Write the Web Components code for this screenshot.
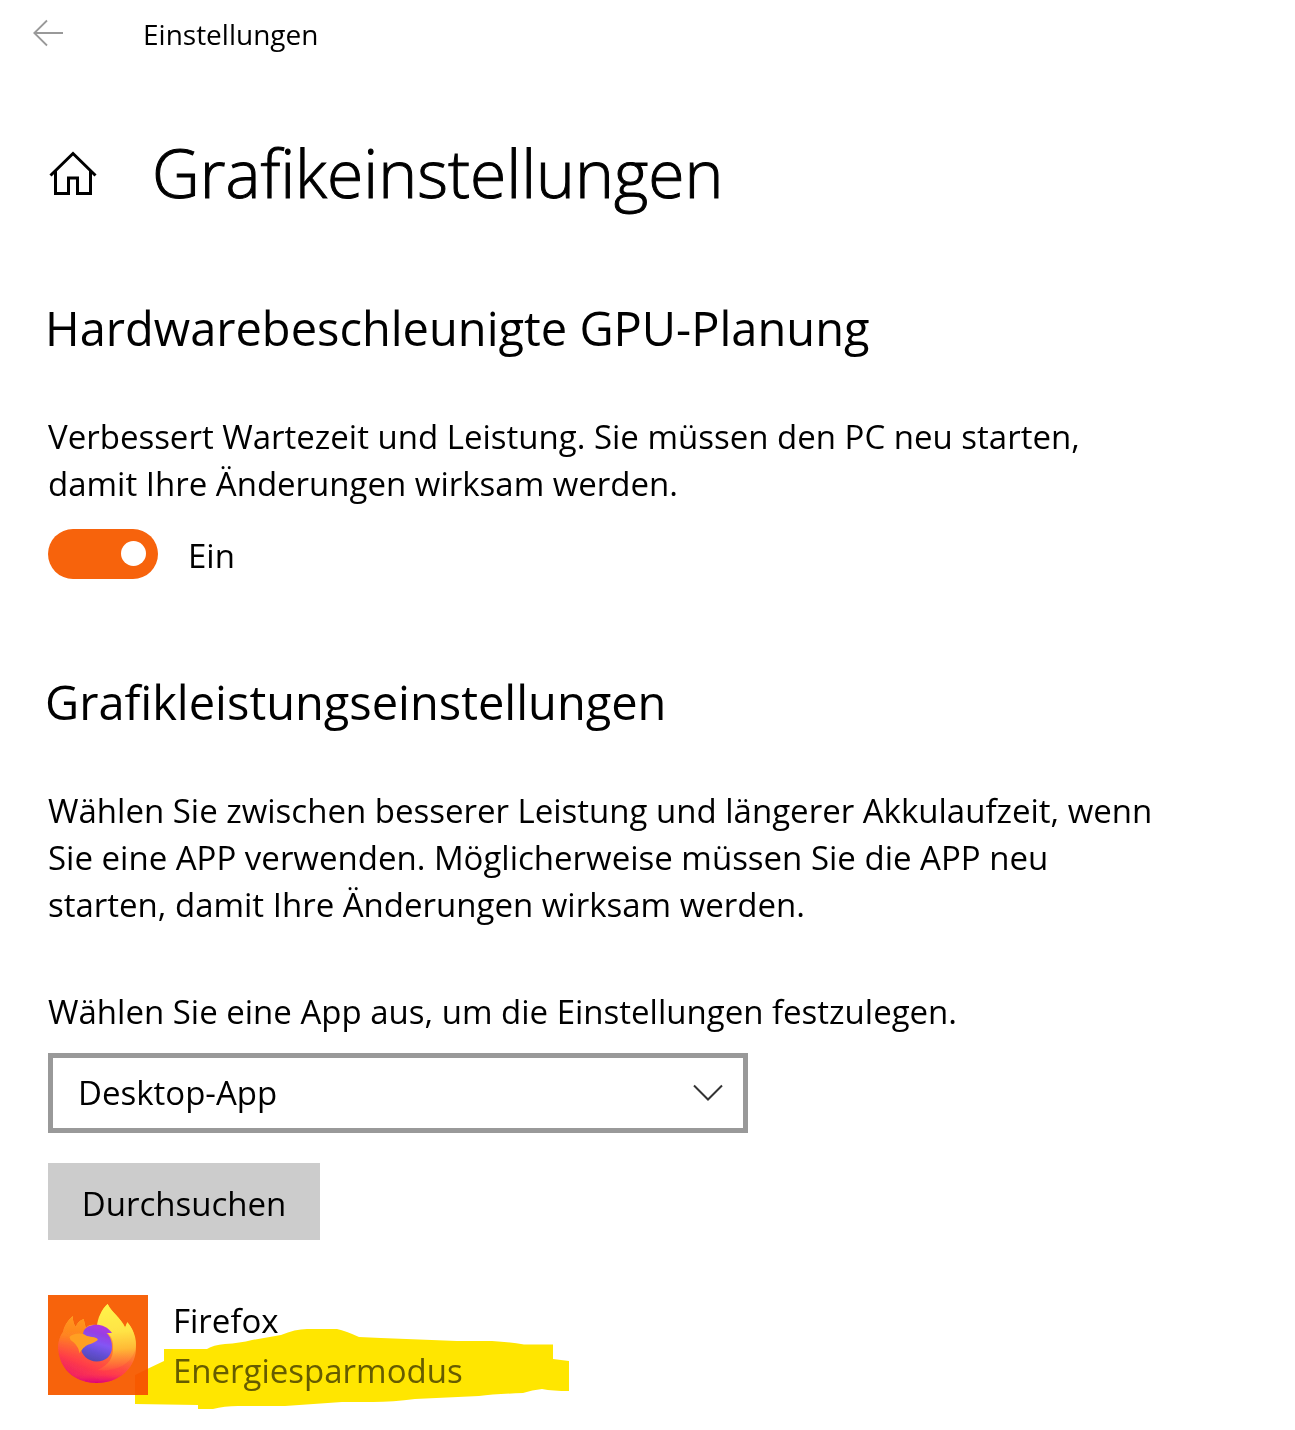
<!DOCTYPE html>
<html lang="de">
<head>
<meta charset="utf-8">
<meta name="viewport" content="width=device-width, initial-scale=1">
<title>Einstellungen</title>
<style>
body { margin: 0; background: #fff; color: #000; font-family: "Segoe UI", "Open Sans", "Noto Sans", sans-serif; font-size: 33px; line-height: 47px; --accent: #f7630c; }
</style>
</head>
<body>
<settings-page></settings-page>
<script>
const define = (name, html) => {
  const template = document.createElement('template');
  template.innerHTML = html;
  customElements.define(name, class extends HTMLElement {
    constructor() {
      super();
      this.attachShadow({ mode: 'open' }).append(template.content.cloneNode(true));
    }
  });
};

define('title-bar', `
<style>
:host { display: flex; align-items: center; gap: 79px; padding: 14px 32px 0; font-size: 28px; line-height: 40px; }
button { display: flex; padding: 0; border: 0; background: none; color: #999; }
svg { display: block; margin-bottom: 2px; }
</style>
<button type="button" aria-label="Zurück">
<svg width="32" height="28" viewBox="0 0 32 28" fill="none" stroke="currentColor" stroke-width="1.8"><path d="M15 1.5 2.3 14 15 26.500M2.300 14H31"/></svg>
</button>
<span><slot></slot></span>`);

define('page-title', `
<style>
:host { display: flex; align-items: center; gap: 54px; padding: 71px 48px 0; }
a { color: inherit; display: block; }
svg { display: block; }
h1 { margin: 0; font-size: 66px; line-height: 94px; font-weight: 300; -webkit-text-stroke: 1px currentColor; }
</style>
<a href="#" aria-label="Startseite">
<svg width="50" height="46" viewBox="0 0 50 46" fill="none" stroke="currentColor" stroke-width="3"><path d="M2.500 27 25 5 47.500 27M7.500 22.500V45H20.500V29.500H29.500V45H42.500V22.500" transform="translate(0 -.5)"/></svg>
</a>
<h1><slot></slot></h1>`);

define('settings-section', `
<style>
:host { display: block; padding: 76px 48px 0; }
:host([follow]) { padding-top: 90px; }
h2 { margin: 0 0 52px -3px; font-size: 47px; line-height: 66px; font-weight: 400; }
</style>
<h2><slot name="heading"></slot></h2>
<slot></slot>`);

define('info-text', `
<style>
:host { display: block; max-width: 1118px; }
p { margin: 0; }
</style>
<p><slot></slot></p>`);

define('toggle-switch', `
<style>
:host { display: block; margin-top: 21px; }
label { display: flex; align-items: center; gap: 30px; }
input { appearance: none; margin: 0; box-sizing: border-box; width: 110px; height: 50px; padding: 0 12px; border-radius: 25px; background: #999; display: flex; align-items: center; }
input::before { content: ""; width: 25px; height: 25px; border-radius: 50%; background: #fff; }
input:checked { background: var(--accent); justify-content: flex-end; }
span { padding-top: 4px; }
</style>
<label><input type="checkbox" role="switch" checked><span><slot></slot></span></label>`);

define('app-picker', `
<style>
:host { display: block; margin-top: 60px; }
label { display: block; margin-bottom: 18px; }
.box { display: grid; align-items: center; max-width: 700px; }
select, svg { grid-area: 1 / 1; }
select { appearance: none; box-sizing: border-box; width: 100%; height: 80px; margin: 0; padding: 0 72px 2px 25px; border: 5px solid #999; border-radius: 0; background: #fff; color: #000; font: inherit; }
svg { justify-self: end; margin-right: 24px; pointer-events: none; }
button { margin: 30px 0 0; width: 272px; height: 77px; padding: 4px 0 0; border: 0; background: #ccc; color: #000; font: inherit; }
</style>
<label for="app"><slot></slot></label>
<div class="box">
<select id="app"><option>Desktop-App</option><option>Microsoft Store-App</option></select>
<svg width="32" height="20" viewBox="0 0 32 20" fill="none" stroke="#333" stroke-width="2"><path d="M2 2.500 16 16.500 30 2.500"/></svg>
</div>
<button type="button">Durchsuchen</button>`);

define('firefox-logo', `
<style>
:host { display: block; width: 100px; height: 100px; background: var(--accent); }
svg { display: block; }
</style>
<svg width="100" height="100" viewBox="0 0 100 100" role="img" aria-label="Firefox">
<defs>
<linearGradient id="body" gradientUnits="userSpaceOnUse" x1="64" y1="22" x2="34" y2="90"><stop offset="0" stop-color="#ffe040"/><stop offset=".25" stop-color="#ffb030"/><stop offset=".5" stop-color="#ff6a35"/><stop offset=".75" stop-color="#ff3d48"/><stop offset="1" stop-color="#e4126f"/></linearGradient>
<linearGradient id="ears" gradientUnits="userSpaceOnUse" x1="28" y1="20" x2="22" y2="64"><stop offset="0" stop-color="#ff9a1c"/><stop offset=".5" stop-color="#ff8420"/><stop offset="1" stop-color="#ff5238" stop-opacity="0"/></linearGradient>
<linearGradient id="rim" x1=".5" y1="0" x2=".5" y2="1"><stop offset=".5" stop-color="#ff3a4b" stop-opacity="0"/><stop offset=".8" stop-color="#ff3452" stop-opacity=".4"/><stop offset="1" stop-color="#dc007c"/></linearGradient>
<linearGradient id="flame" gradientUnits="userSpaceOnUse" x1="60" y1="10" x2="66" y2="80"><stop offset="0" stop-color="#fff44a"/><stop offset=".4" stop-color="#ffe345"/><stop offset=".65" stop-color="#ffb936"/><stop offset=".85" stop-color="#ff7b38" stop-opacity=".7"/><stop offset="1" stop-color="#ff5a3a" stop-opacity="0"/></linearGradient>
<linearGradient id="globe" gradientUnits="userSpaceOnUse" x1="54" y1="31" x2="42" y2="68"><stop offset="0" stop-color="#b836dc"/><stop offset=".25" stop-color="#963fe4"/><stop offset=".5" stop-color="#8355f4"/><stop offset=".72" stop-color="#6650d8"/><stop offset="1" stop-color="#5148ac"/></linearGradient>
<filter id="soft"><feGaussianBlur stdDeviation=".7"/></filter>
</defs>
<g filter="url(#soft)" transform="matrix(1.09 0 0 1 -2.500 -1)">
<path d="M25 22C20 27 17 32 16 38C12 44 11 52 12 58C14 77 29 89 47 89C68 89 84 73 83 52C82 42 80 33 75 29L73 33C69 24 61 19 57 10C51 16 49 24 49 32C44 30 40 30 37 34L35 25C31 27 29 29 28 33C26 31 25 26 25 22Z" fill="url(#body)"/>
<path d="M25 22C20 27 17 32 16 38C12 44 11 52 12 58C16 66 26 68 34 62L38 40L35 25C31 27 29 29 28 33C26 31 25 26 25 22Z" fill="url(#ears)"/>
<path d="M12 52C12 74 28 89 47 89C67 89 83 75 83 52L75 45C76 70 60 79 45 76C30 75 18 66 12 52Z" fill="url(#rim)"/>
<path d="M57 10C51 16 48 24 47 33C56 35 63 43 62 54C62 64 58 71 48 76C70 79 83 64 83 50C83 41 79 33 75 28L73 34C69 23 61 19 57 10Z" fill="url(#flame)"/>
<path d="M35 37C39 29 54 28 61 39L56 39C60 43 61 48 61 53C61 62 55 67.500 47 67.500C39 67.500 32.500 61 32.500 53C32.500 48 34 43 35 37Z" fill="url(#globe)"/>
<path d="M22 43C25 39 34 38 38 42C42 43 48 43 48 46C44 50 38 50 36 53C34 54 33 57 31 59C31 54 27 49 23 46Z" fill="#ffa022"/>
</g>
</svg>`);

define('app-entry', `
<style>
:host { display: flex; gap: 25px; margin-top: 55px; padding-bottom: 35px; position: relative; }
.text { display: flex; flex-direction: column; gap: 3px; padding-top: 2px; }
.mode { color: #666; }
.marker { position: absolute; left: 87px; top: 34px; mix-blend-mode: multiply; pointer-events: none; }
</style>
<firefox-logo></firefox-logo>
<div class="text"><span><slot name="name"></slot></span><span class="mode"><slot name="mode"></slot></span></div>
<svg class="marker" width="436" height="82" viewBox="0 0 436 82" aria-hidden="true"><path fill="#ffe600" d="M0 75V46Q12 40 29 32V20H72Q78 16 90 15Q105 14 117 11L146 6Q160 0 172 0H202Q211 2 224 8L246 9L322 12H357Q375 13 389 15.500H418V30L434 32V62Q418 62 407 60Q397 61 388 64Q360 65 344 67L280 70Q258 73 238 73H207L150 77H103Q89 77 78 80H63V76Z"/></svg>`);

define('settings-page', `
<style>:host { display: block; }</style>
<header><title-bar>Einstellungen</title-bar></header>
<main>
<page-title>Grafikeinstellungen</page-title>
<settings-section>
<span slot="heading">Hardwarebeschleunigte GPU-Planung</span>
<info-text>Verbessert Wartezeit und Leistung. Sie müssen den PC neu starten, damit Ihre Änderungen wirksam werden.</info-text>
<toggle-switch>Ein</toggle-switch>
</settings-section>
<settings-section follow>
<span slot="heading">Grafikleistungseinstellungen</span>
<info-text>Wählen Sie zwischen besserer Leistung und längerer Akkulaufzeit, wenn Sie eine APP verwenden. Möglicherweise müssen Sie die APP neu starten, damit Ihre Änderungen wirksam werden.</info-text>
<app-picker>Wählen Sie eine App aus, um die Einstellungen festzulegen.</app-picker>
<app-entry><span slot="name">Firefox</span><span slot="mode">Energiesparmodus</span></app-entry>
</settings-section>
</main>`);
</script>
</body>
</html>
